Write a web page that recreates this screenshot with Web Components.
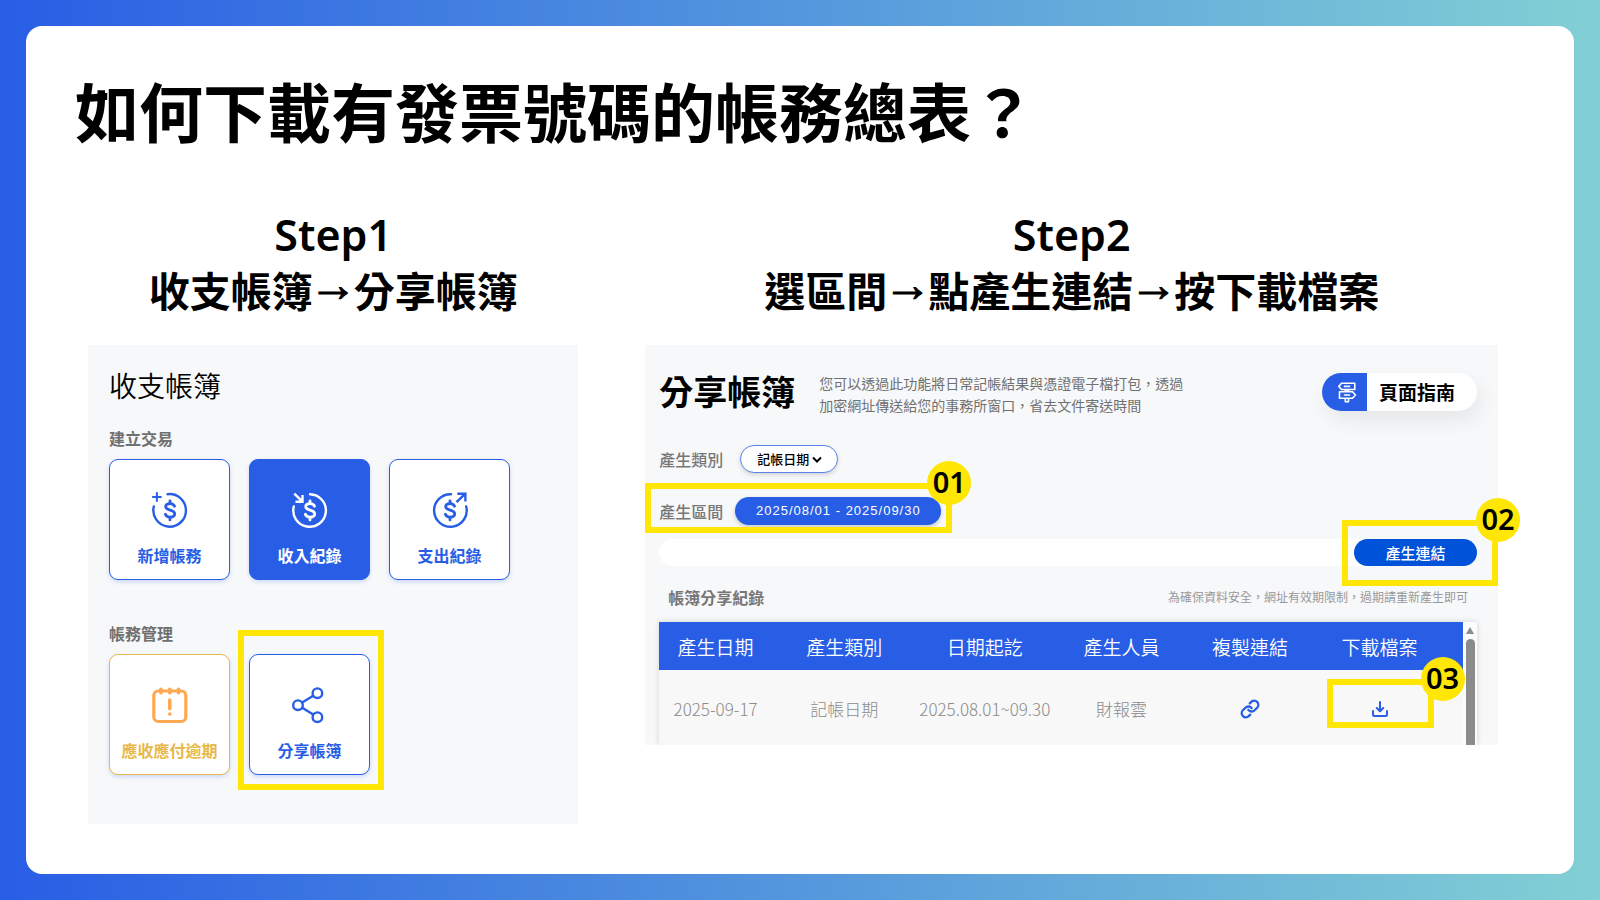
<!DOCTYPE html>
<html lang="zh-Hant">
<head>
<meta charset="utf-8">
<title>如何下載有發票號碼的帳務總表？</title>
<style>
  html, body { margin: 0; min-height: 100%; }
  body {
    font-family: "Noto Sans CJK TC", sans-serif;
    color: #000;
  }
</style>
</head>
<body>
<guide-slide>
  <h1 slot="title">如何下載有發票號碼的帳務總表？</h1>
  <guide-step slot="first" heading="Step1" path="收支帳簿|分享帳簿">
    <ledger-menu></ledger-menu>
  </guide-step>
  <guide-step slot="second" heading="Step2" path="選區間|點產生連結|按下載檔案">
    <share-ledger></share-ledger>
  </guide-step>
</guide-slide>

<script>
  function define(name, html, setup) {
    const template = document.createElement('template');
    template.innerHTML = html;
    customElements.define(name, class extends HTMLElement {
      constructor() {
        super();
        this.attachShadow({ mode: 'open' }).append(template.content.cloneNode(true));
      }
      connectedCallback() {
        if (setup) setup(this, this.shadowRoot);
      }
    });
  }

  // White card on a gradient, with a title and two columns.
  define('guide-slide', `
    <style>
      :host {
        display: flex; box-sizing: border-box; min-height: 100vh; padding: 26px;
        background: linear-gradient(90deg, #285ee5, #82d0d5);
      }
      main {
        flex: 1; box-sizing: border-box; background: #fff; border-radius: 16px;
        padding: 37px 76px 40px 49px;
      }
      ::slotted(h1) { margin: 0; font-size: 64px; line-height: 92px; font-weight: 700; }
      .columns {
        display: grid; grid-template-columns: 490fr 852fr; column-gap: 67px;
        margin: 54px 0 0 13px; align-items: start;
      }
    </style>
    <main>
      <slot name="title"></slot>
      <div class="columns"><slot name="first"></slot><slot name="second"></slot></div>
    </main>`);

  // Caption over a picture of the application.
  define('guide-step', `
    <style>
      :host { display: block; min-width: 0; }
      h2 { margin: 0 0 28px; text-align: center; font-size: 41px; line-height: 56px; font-weight: 700; }
      .step { display: block; font: 600 43px/52px "Noto Sans", sans-serif; }
      .path { display: block; white-space: nowrap; }
      .arrow {
        display: inline-block; width: 41px; vertical-align: 6px;
        font: 700 48px/48px "Liberation Mono", monospace; -webkit-text-stroke: 1px;
      }
    </style>
    <h2><span class="step"></span><span class="path"></span></h2>
    <slot></slot>`,
    (host, root) => {
      root.querySelector('.step').textContent = host.getAttribute('heading');
      root.querySelector('.path').innerHTML =
        host.getAttribute('path').split('|').join('<span class="arrow">→</span>');
    });

  // Yellow outline with an optional number, laid over the corner of what it holds.
  define('mark-frame', `
    <style>
      :host { display: block; position: relative; }
      .frame {
        position: absolute; inset: var(--mark-inset, 0); border: 6px solid #ffe605;
        pointer-events: none;
      }
      .number {
        position: absolute; top: -28px; right: var(--number-right, -25px); width: 44px; height: 44px;
        border-radius: 50%; background: #ffe605; text-align: center; color: #000;
        font: 600 29px/42px "Noto Sans", sans-serif;
      }
      .number:empty { display: none; }
    </style>
    <slot></slot>
    <div class="frame"><span class="number"></span></div>`,
    (host, root) => {
      root.querySelector('.number').textContent = host.getAttribute('number') || '';
    });

  const dollar = '<g stroke-width="2.800"><path d="M22.500 14.200c-.6-1.700-2.100-2.600-4.400-2.600-2.700 0-4.400 1.100-4.400 3.100 0 4.400 9 2.500 9 7.100 0 2.200-1.800 3.300-4.600 3.300-2.400 0-4.100-1-4.700-2.800"/><path d="M18 8.800v2.400M18 25.500v2.400"/></g>';
  const icons = {
    add: '<path d="M15.500 2.200A16.300 16.300 0 1 1 1.800 14.500"/><path d="M4.900 1v8M.9 5h8" stroke-width="2"/>' + dollar,
    income: '<path d="M18 2.200A16.300 16.300 0 1 1 1.800 14.500"/><path d="M2.300 1.600l8.200 8M10.500 3v6.800H3.500" stroke-linecap="butt" stroke-linejoin="miter"/>' + dollar,
    expense: '<path d="M19 2.200A16.300 16.300 0 1 0 34.200 14.500"/><path d="M24.500 10.200l8.600-8.400M25.300 1.700H33.400V9.400" stroke-linecap="butt" stroke-linejoin="miter"/>' + dollar,
    overdue: '<rect x="1.800" y="4" width="32" height="30.500" rx="4.500" stroke-width="3.200"/><path d="M9 2.500v3M17.800 2.500v3M26.500 2.500v3" stroke-width="3.800"/><path d="M17.800 13v8.800M17.800 27v.1" stroke-width="3.600"/>',
    share: '<circle cx="6" cy="18.200" r="4.800"/><circle cx="25.400" cy="6.200" r="4.800"/><circle cx="25.400" cy="30.200" r="4.800"/><path d="M10.200 15.600l11-6.800M10.200 20.800l11 6.800"/>'
  };

  // Square button with an icon above its caption.
  define('menu-tile', `
    <style>
      :host { display: block; --tint: #285ee5; }
      :host([tone="filled"]) { --face: #285ee5; --ink: #fff; }
      :host([tone="warning"]) { --tint: #e8b849; --icon: #ffa852; }
      button {
        box-sizing: border-box; width: 100%; height: 121px; padding: 32px 0 8px; margin: 0;
        display: flex; flex-direction: column; align-items: center; gap: 15px;
        border: 1px solid var(--tint); border-radius: 9px; background: var(--face, #fff);
        color: var(--ink, var(--tint)); box-shadow: 0 2px 4px #285ee533;
        font: 700 16px/24px "Noto Sans CJK TC", sans-serif;
      }
      svg {
        flex: none; width: 36px; height: 36px; fill: none; stroke: var(--icon, currentColor);
        stroke-width: 2.400; stroke-linecap: round; stroke-linejoin: round; overflow: visible;
      }
    </style>
    <button type="button"><svg viewBox="0 0 36 36" aria-hidden="true"></svg><slot></slot></button>`,
    (host, root) => {
      root.querySelector('svg').innerHTML = icons[host.getAttribute('icon')];
    });

  define('ledger-menu', `
    <style>
      :host {
        display: block; box-sizing: border-box; padding: 16px 21px 8px;
        background: #f7f8fa;
      }
      h3 { margin: 0 0 17px; font-size: 28px; line-height: 48px; font-weight: 350; }
      h4 { margin: 0 0 9px; font-size: 16px; line-height: 24px; font-weight: 700; color: #707070; }
      .tiles {
        display: grid; grid-template-columns: repeat(3, 121px); column-gap: 19px;
        margin-bottom: 41px;
      }
      mark-frame { --mark-inset: -24px -14px -15px -11px; }
    </style>
    <h3>收支帳簿</h3>
    <h4>建立交易</h4>
    <div class="tiles">
      <menu-tile icon="add">新增帳務</menu-tile>
      <menu-tile icon="income" tone="filled">收入紀錄</menu-tile>
      <menu-tile icon="expense">支出紀錄</menu-tile>
    </div>
    <h4>帳務管理</h4>
    <div class="tiles">
      <menu-tile icon="overdue" tone="warning">應收應付逾期</menu-tile>
      <mark-frame><menu-tile icon="share">分享帳簿</menu-tile></mark-frame>
    </div>`);

  define('share-ledger', `
    <style>
      :host { display: block; background: #f7f8fa; padding: 0 21px 0 14px; }
      header { display: flex; align-items: flex-start; padding-top: 19px; }
      h3 { margin: 0 24px 0 0; font-size: 34px; line-height: 54px; font-weight: 700; }
      header p { margin: 8px auto 0 0; max-width: 376px; font-size: 14px; line-height: 22px; color: #707070; }
      .guide {
        display: flex; width: 155px; height: 38px; margin: 9px 0 0; padding: 0; border: 0;
        border-radius: 19px; background: #fff; overflow: hidden; color: #000;
        box-shadow: 4px 10px 20px #00000012;
        font: 700 19px/38px "Noto Sans CJK TC", sans-serif;
      }
      .guide svg {
        width: 45px; height: 38px; background: #285ee5; fill: #285ee5; stroke: #fff;
        stroke-width: 1.600; stroke-linejoin: round; stroke-linecap: round;
      }
      .guide span { padding-left: 12px; }
      .field { display: flex; align-items: center; height: 28px; }
      .category { margin-top: 27px; }
      .field label, .field .label { width: 81px; font-size: 16px; line-height: 28px; font-weight: 500; color: #777; }
      .picker { position: relative; }
      select {
        appearance: none; display: block; box-sizing: border-box; width: 98px; height: 28px; margin: 0;
        padding: 0 0 0 16px; border: 1px solid #5a82ea; border-radius: 14px; background: #fff; color: #000;
        box-shadow: 0 2px 4px #00000026; font: 500 13px/24px "Noto Sans CJK TC", sans-serif;
      }
      .picker svg {
        position: absolute; right: 16px; top: 11px; width: 10px; height: 8px; fill: none;
        stroke: #000; stroke-width: 2; pointer-events: none;
      }
      .range { width: 282px; margin-top: 24px; --mark-inset: -14px -11px -8px -14px; }
      .range button {
        width: 206px; height: 28px; margin-left: -5px; padding: 0; border: 0; border-radius: 14px;
        background: #285ee5; color: #fff; box-shadow: 0 2px 4px #00000033;
        font: 400 13px/28px "Liberation Sans", sans-serif; letter-spacing: 1px;
      }
      .bar { display: flex; margin-top: 14px; border-radius: 14px; background: #fff; }
      .bar input {
        flex: 1; min-width: 0; height: 27px; padding: 0 14px; border: 0; background: none;
        outline: 0; box-sizing: border-box;
      }
      .make { --mark-inset: -19px -21px -20px -12px; --number-right: -28px; }
      .make button {
        display: block; width: 123px; height: 27px; padding: 0; border: 0; border-radius: 14px;
        background: #0052d9; color: #fff; font: 500 15px/27px "Noto Sans CJK TC", sans-serif;
      }
      .caption { display: flex; justify-content: space-between; padding: 0 9px; margin-top: 19px; line-height: 24px; }
      h4 { margin: 0; font-size: 16px; line-height: 24px; font-weight: 700; color: #777; }
      .caption span { font-size: 12px; color: #999; }
      .records {
        display: flex; margin-top: 13px; height: 123px; background: #f8f8f8;
        box-shadow: 0 0 6px #00000026; clip-path: inset(-8px -8px 0 -8px);
      }
      .sheet { flex: 1; min-width: 0; }
      table { width: 100%; border-collapse: collapse; table-layout: fixed; text-align: center; }
      th { height: 48px; padding: 0; background: #285ee5; color: #fff; font-size: 19px; font-weight: 350; }
      td { height: 73px; padding: 2px 0 0; color: #8c8c8c; font-size: 17px; font-weight: 300; }
      th:last-child, td:last-child { padding-right: 14px; }
      td a, .save button { display: block; width: 20px; height: 20px; margin: 0 auto; padding: 0; border: 0; background: none; }
      td svg { display: block; width: 20px; height: 20px; fill: none; stroke: #285ee5; stroke-width: 2; stroke-linecap: round; stroke-linejoin: round; }
      td a svg { stroke-width: 2.800; }
      .save { width: 20px; margin: 0 auto; --mark-inset: -20px -44px -9px -43px; --number-right: -37px; }
      .scroll { width: 14px; background: #fcfcfc; display: flex; flex-direction: column; align-items: center; }
      .scroll::before { content: ""; margin: 5px 0; border: 4px solid transparent; border-top: 0; border-bottom: 7px solid #8b8b8b; }
      .scroll::after { content: ""; flex: 1; width: 9px; border-radius: 5px 5px 0 0; background: #8b8b8b; }
    </style>
    <header>
      <h3>分享帳簿</h3>
      <p>您可以透過此功能將日常記帳結果與憑證電子檔打包，透過加密網址傳送給您的事務所窗口，省去文件寄送時間</p>
      <button class="guide" type="button">
        <svg viewBox="0 0 45 38" aria-hidden="true"><path d="M23.300 17v11.800h3.200V17z"/><path d="M19.500 10.300H32.800v6.200H19.500L16.800 13.400z"/><path d="M17.500 18.800h13l3 3.200-3 3.200h-13z"/><path d="M22.500 13.400h5M22.500 22h5"/></svg>
        <span>頁面指南</span>
      </button>
    </header>
    <div class="field category">
      <label for="category">產生類別</label>
      <div class="picker">
        <select id="category"><option>記帳日期</option></select>
        <svg viewBox="0 0 10 8" aria-hidden="true"><path d="M1 1.500l4 4 4-4"/></svg>
      </div>
    </div>
    <mark-frame class="range" number="01">
      <div class="field"><span class="label">產生區間</span><button type="button">2025/08/01 - 2025/09/30</button></div>
    </mark-frame>
    <div class="bar">
      <input type="text" aria-label="分享連結" readonly>
      <mark-frame class="make" number="02"><button type="button">產生連結</button></mark-frame>
    </div>
    <div class="caption"><h4>帳簿分享紀錄</h4><span>為確保資料安全，網址有效期限制，過期請重新產生即可</span></div>
    <div class="records">
      <div class="sheet">
        <table>
          <colgroup><col style="width:14%"><col style="width:18%"><col style="width:17%"><col style="width:17%"><col style="width:15%"><col></colgroup>
          <thead><tr><th>產生日期</th><th>產生類別</th><th>日期起訖</th><th>產生人員</th><th>複製連結</th><th>下載檔案</th></tr></thead>
          <tbody><tr>
            <td>2025-09-17</td><td>記帳日期</td><td>2025.08.01~09.30</td><td>財報雲</td>
            <td><a href="#link" aria-label="複製連結"><svg viewBox="0 0 24 24"><path d="M10 13a5 5 0 0 0 7.540.54l3-3a5 5 0 0 0-7.070-7.070l-1.720 1.710"/><path d="M14 11a5 5 0 0 0-7.540-.54l-3 3a5 5 0 0 0 7.070 7.070l1.710-1.710"/></svg></a></td>
            <td><mark-frame class="save" number="03"><button type="button" aria-label="下載檔案"><svg viewBox="0 0 20 20"><path d="M3 12v3.500q0 1.500 1.500 1.500h11q1.500 0 1.500-1.500V12M10 3v9M6.800 9l3.200 3.200L13.200 9"/></svg></button></mark-frame></td>
          </tr></tbody>
        </table>
      </div>
      <div class="scroll"></div>
    </div>`);
</script>
</body>
</html>
